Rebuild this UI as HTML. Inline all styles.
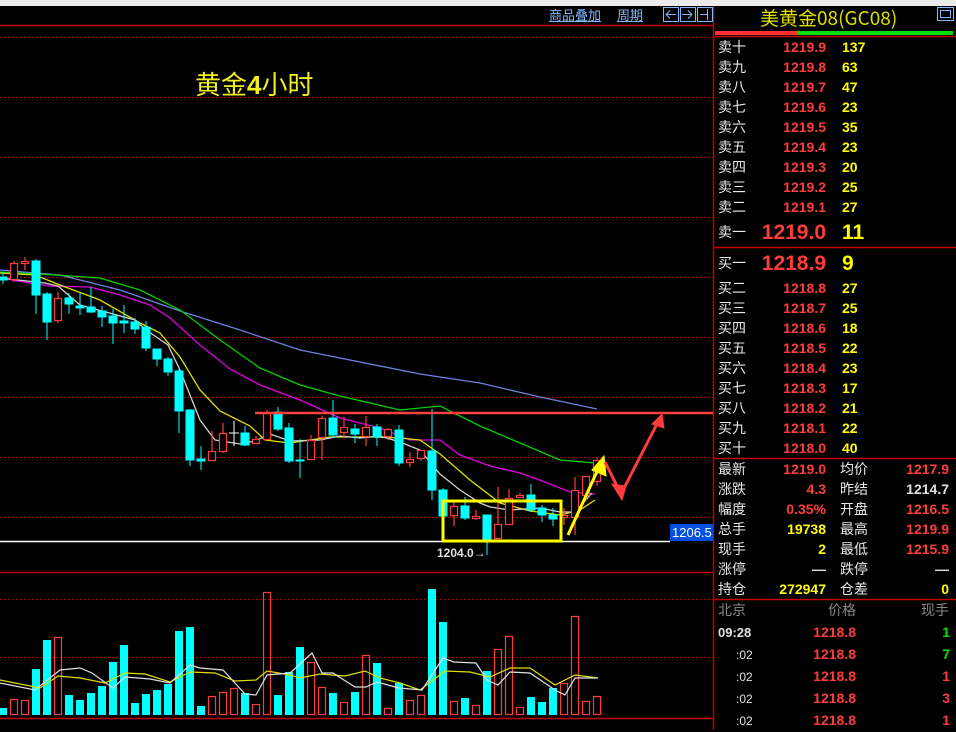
<!DOCTYPE html>
<html><head><meta charset="utf-8"><style>
body{margin:0;width:956px;height:730px;background:#000;overflow:hidden;position:relative;font-family:"Liberation Sans","WenQuanYi Zen Hei",sans-serif}
.a{position:absolute;white-space:nowrap;line-height:1}
.l{color:#e8e8e8;font-size:14px;font-family:"WenQuanYi Zen Hei","Noto Sans CJK SC",sans-serif}
.p{color:#ff3c3c;font-size:14px;font-weight:bold;text-align:right;width:70px}
.q{color:#ffff00;font-size:14px;font-weight:bold}
.v{font-size:14px;font-weight:bold;text-align:right;width:80px}
</style></head><body>
<div class="a" style="left:0;top:0;width:956px;height:6px;background:#ececec"></div>
<svg class="a" style="left:0;top:0" width="956" height="730">
<g stroke="#b00000" stroke-width="1" stroke-dasharray="2,2">
<line x1="0" y1="37.5" x2="713" y2="37.5"/><line x1="0" y1="97.5" x2="713" y2="97.5"/><line x1="0" y1="157.5" x2="713" y2="157.5"/><line x1="0" y1="217.5" x2="713" y2="217.5"/><line x1="0" y1="277.5" x2="713" y2="277.5"/><line x1="0" y1="337.5" x2="713" y2="337.5"/><line x1="0" y1="397.5" x2="713" y2="397.5"/><line x1="0" y1="457.5" x2="713" y2="457.5"/><line x1="0" y1="517.5" x2="713" y2="517.5"/><line x1="0" y1="599.5" x2="713" y2="599.5"/><line x1="0" y1="657.5" x2="713" y2="657.5"/>
</g>
<g stroke="#c00000" stroke-width="1.5">
<line x1="0" y1="25.5" x2="713" y2="25.5"/><line x1="0" y1="572.5" x2="713" y2="572.5"/><line x1="0" y1="718.5" x2="713" y2="718.5"/>
<line x1="713.5" y1="6" x2="713.5" y2="730"/>
<line x1="714" y1="247.5" x2="956" y2="247.5"/><line x1="714" y1="458.5" x2="956" y2="458.5"/><line x1="714" y1="599.5" x2="956" y2="599.5"/><line x1="714" y1="36.5" x2="956" y2="36.5"/>
</g>
<line x1="0" y1="541.5" x2="670" y2="541.5" stroke="#fff" stroke-width="1.5"/>
<rect x="715" y="31" width="82" height="4" fill="#ff3030"/><rect x="797" y="31" width="156" height="4" fill="#00e000"/>
<rect x="937.5" y="7.5" width="16" height="13" fill="none" stroke="#80b8ff"/><rect x="940.5" y="10.5" width="10" height="7" fill="none" stroke="#80b8ff"/>
<g fill="none" stroke="#80b8ff"><rect x="663.5" y="7.5" width="15" height="14"/><rect x="680.5" y="7.5" width="15" height="14"/><rect x="697.5" y="7.5" width="15" height="14"/>
<path d="M666 14.5h10M666 14.5l4-4M666 14.5l4 4M692 14.5h-10M692 14.5l-4-4M692 14.5l-4 4M700 14.5h7M707.5 9v11"/></g>
<g fill="none" stroke-width="1.3">
<polyline stroke="#7080e0" points="0,270 60,275 120,290 180,311 240,330 300,350 360,362 420,374 480,383 540,397 597,409"/>
<polyline stroke="#00d000" points="0,272 40,274 100,278 140,290 180,310 220,340 260,368 300,385 340,396 400,410 440,406 480,426 520,443 560,460 595,463"/>
<polyline stroke="#e000e0" points="0,278 30,283 50,286 90,287 120,295 150,305 170,318 200,345 230,369 260,385 300,400 340,418 380,428 410,440 440,440 460,455 490,466 520,473 545,482 570,492 595,494"/>
<polyline stroke="#e0e000" points="0,273 35,275 60,285 100,300 140,323 160,333 180,357 200,390 220,411 250,426 265,440 290,443 330,437 370,437 400,438 420,440 440,454 470,480 500,503 530,511 560,515 580,510 595,500"/>
<polyline stroke="#d0d0d0" points="0,278 45,283 58,286 80,305 135,320 146,330 168,345 180,370 200,420 215,440 240,444 255,441 270,434 290,441 320,440 340,436 360,438 380,436 400,442 420,450 440,474 460,490 480,503 490,507 510,510 540,508 560,512 575,512 592,493"/>
</g>
<g stroke="#00ffff" fill="#00ffff" stroke-width="1">
<line x1="3" y1="272" x2="3" y2="284"/><rect x="-1" y="277" width="8" height="3"/>
<line x1="36" y1="259" x2="36" y2="314"/><rect x="32" y="261" width="8" height="34"/>
<line x1="47" y1="292" x2="47" y2="340"/><rect x="43" y="294" width="8" height="28"/>
<line x1="69" y1="293" x2="69" y2="314"/><rect x="65" y="298" width="8" height="6"/>
<line x1="80" y1="293" x2="80" y2="315"/><rect x="76" y="306" width="8" height="2"/>
<line x1="91" y1="287" x2="91" y2="313"/><rect x="87" y="307" width="8" height="5"/>
<line x1="102" y1="306" x2="102" y2="327"/><rect x="98" y="311" width="8" height="6"/>
<line x1="113" y1="309" x2="113" y2="344"/><rect x="109" y="316" width="8" height="7"/>
<line x1="124" y1="305" x2="124" y2="333"/><rect x="120" y="321" width="8" height="2"/>
<line x1="135" y1="318" x2="135" y2="334"/><rect x="131" y="322" width="8" height="7"/>
<line x1="146" y1="321" x2="146" y2="351"/><rect x="142" y="327" width="8" height="21"/>
<line x1="157" y1="349" x2="157" y2="366"/><rect x="153" y="349" width="8" height="10"/>
<line x1="168" y1="357" x2="168" y2="376"/><rect x="164" y="359" width="8" height="13"/>
<line x1="179" y1="368" x2="179" y2="433"/><rect x="175" y="371" width="8" height="40"/>
<line x1="190" y1="409" x2="190" y2="466"/><rect x="186" y="410" width="8" height="50"/>
<line x1="201" y1="446" x2="201" y2="470"/><rect x="197" y="459" width="8" height="2"/>
<line x1="245" y1="426" x2="245" y2="446"/><rect x="241" y="433" width="8" height="12"/>
<line x1="278" y1="407" x2="278" y2="431"/><rect x="274" y="412" width="8" height="17"/>
<line x1="289" y1="423" x2="289" y2="463"/><rect x="285" y="428" width="8" height="33"/>
<line x1="300" y1="439" x2="300" y2="478"/><rect x="296" y="460" width="8" height="1"/>
<line x1="333" y1="400" x2="333" y2="438"/><rect x="329" y="418" width="8" height="17"/>
<line x1="355" y1="424" x2="355" y2="443"/><rect x="351" y="429" width="8" height="5"/>
<line x1="377" y1="424" x2="377" y2="446"/><rect x="373" y="427" width="8" height="10"/>
<line x1="399" y1="425" x2="399" y2="466"/><rect x="395" y="430" width="8" height="33"/>
<line x1="432" y1="409" x2="432" y2="500"/><rect x="428" y="451" width="8" height="39"/>
<line x1="443" y1="488" x2="443" y2="518"/><rect x="439" y="490" width="8" height="26"/>
<line x1="465" y1="497" x2="465" y2="520"/><rect x="461" y="506" width="8" height="12"/>
<line x1="487" y1="515" x2="487" y2="555"/><rect x="483" y="515" width="8" height="24"/>
<line x1="531" y1="484" x2="531" y2="512"/><rect x="527" y="495" width="8" height="15"/>
<line x1="542" y1="505" x2="542" y2="522"/><rect x="538" y="508" width="8" height="7"/>
<line x1="553" y1="508" x2="553" y2="526"/><rect x="549" y="515" width="8" height="4"/>
</g>
<g stroke="#fff"><line x1="234" y1="421" x2="234" y2="446"/><line x1="229" y1="433" x2="239" y2="433"/></g>
<g stroke="#ff3c3c" fill="#000" stroke-width="1.2">
<line x1="14" y1="261" x2="14" y2="282"/><rect x="10.5" y="263.5" width="7" height="16"/>
<line x1="25" y1="257" x2="25" y2="270"/><rect x="21.5" y="261.5" width="7" height="2"/>
<line x1="58" y1="292" x2="58" y2="323"/><rect x="54.5" y="298.5" width="7" height="22"/>
<line x1="212" y1="431" x2="212" y2="460"/><rect x="208.5" y="451.5" width="7" height="9"/>
<line x1="223" y1="423" x2="223" y2="453"/><rect x="219.5" y="433.5" width="7" height="18"/>
<line x1="256" y1="436" x2="256" y2="444"/><rect x="252.5" y="439.5" width="7" height="4"/>
<line x1="267" y1="410" x2="267" y2="440"/><rect x="263.5" y="413.5" width="7" height="26"/>
<line x1="311" y1="435" x2="311" y2="460"/><rect x="307.5" y="440.5" width="7" height="19"/>
<line x1="322" y1="416" x2="322" y2="460"/><rect x="318.5" y="418.5" width="7" height="19"/>
<line x1="344" y1="417" x2="344" y2="438"/><rect x="340.5" y="427.5" width="7" height="5"/>
<line x1="366" y1="416" x2="366" y2="446"/><rect x="362.5" y="427.5" width="7" height="9"/>
<line x1="388" y1="428" x2="388" y2="440"/><rect x="384.5" y="429.5" width="7" height="7"/>
<line x1="410" y1="452" x2="410" y2="467"/><rect x="406.5" y="459.5" width="7" height="3"/>
<line x1="421" y1="450" x2="421" y2="461"/><rect x="417.5" y="450.5" width="7" height="8"/>
<line x1="454" y1="502" x2="454" y2="526"/><rect x="450.5" y="506.5" width="7" height="9"/>
<line x1="476" y1="510" x2="476" y2="520"/><rect x="472.5" y="516.5" width="7" height="2"/>
<line x1="498" y1="487" x2="498" y2="539"/><rect x="494.5" y="524.5" width="7" height="14"/>
<line x1="509" y1="489" x2="509" y2="525"/><rect x="505.5" y="498.5" width="7" height="26"/>
<line x1="520" y1="493" x2="520" y2="498"/><rect x="516.5" y="495.5" width="7" height="2"/>
<line x1="564" y1="508" x2="564" y2="525"/><rect x="560.5" y="515.5" width="7" height="2"/>
<line x1="575" y1="477" x2="575" y2="535"/><rect x="571.5" y="490.5" width="7" height="27"/>
<line x1="586" y1="476" x2="586" y2="500"/><rect x="582.5" y="476.5" width="7" height="19"/>
<line x1="597" y1="458" x2="597" y2="486"/><rect x="593.5" y="460.5" width="7" height="21"/>
</g>
<line x1="255" y1="413" x2="713" y2="413" stroke="#ff4040" stroke-width="2.5"/>
<rect x="443" y="501" width="118" height="40" fill="none" stroke="#ffff00" stroke-width="3"/>
<g fill="#ffff00" stroke="#ffff00" stroke-width="3"><line x1="568" y1="535" x2="600" y2="465"/><path d="M604 456 L606 476 L592 470 Z" stroke-width="1"/></g>
<g fill="#ff3c3c" stroke="#ff3c3c" stroke-width="3"><polyline fill="none" points="605,462 621,494 659,420"/><path d="M622 500 L612 484 L626 486 Z M662 414 L664 428 L652 424 Z" stroke-width="1"/></g>
<rect x="670" y="524" width="43" height="17" fill="#0050e0"/>
<g fill="#00ffff">
<rect x="-1" y="708" width="8" height="7"/><rect x="32" y="669" width="8" height="46"/><rect x="43" y="640" width="8" height="75"/><rect x="65" y="695" width="8" height="20"/><rect x="76" y="700" width="8" height="15"/><rect x="87" y="693" width="8" height="22"/><rect x="98" y="686" width="8" height="29"/><rect x="109" y="662" width="8" height="53"/><rect x="120" y="645" width="8" height="70"/><rect x="131" y="703" width="8" height="12"/><rect x="142" y="694" width="8" height="21"/><rect x="153" y="690" width="8" height="25"/><rect x="164" y="684" width="8" height="31"/><rect x="175" y="631" width="8" height="84"/><rect x="186" y="627" width="8" height="88"/><rect x="197" y="706" width="8" height="9"/><rect x="241" y="693" width="8" height="22"/><rect x="274" y="695" width="8" height="20"/><rect x="285" y="672" width="8" height="43"/><rect x="296" y="647" width="8" height="68"/><rect x="329" y="693" width="8" height="22"/><rect x="351" y="692" width="8" height="23"/><rect x="373" y="663" width="8" height="52"/><rect x="395" y="683" width="8" height="32"/><rect x="428" y="589" width="8" height="126"/><rect x="439" y="622" width="8" height="93"/><rect x="461" y="698" width="8" height="17"/><rect x="483" y="671" width="8" height="44"/><rect x="527" y="697" width="8" height="18"/><rect x="538" y="702" width="8" height="13"/><rect x="549" y="688" width="8" height="27"/>
</g>
<g fill="none" stroke="#ff3c3c" stroke-width="1.2">
<rect x="10.5" y="699.5" width="7" height="15"/><rect x="21.5" y="700.5" width="7" height="14"/><rect x="54.5" y="637.5" width="7" height="77"/><rect x="208.5" y="696.5" width="7" height="18"/><rect x="219.5" y="692.5" width="7" height="22"/><rect x="230.5" y="688.5" width="7" height="26"/><rect x="252.5" y="704.5" width="7" height="10"/><rect x="263.5" y="592.5" width="7" height="122"/><rect x="307.5" y="662.5" width="7" height="52"/><rect x="318.5" y="687.5" width="7" height="27"/><rect x="340.5" y="702.5" width="7" height="12"/><rect x="362.5" y="655.5" width="7" height="59"/><rect x="384.5" y="708.5" width="7" height="6"/><rect x="406.5" y="700.5" width="7" height="14"/><rect x="417.5" y="695.5" width="7" height="19"/><rect x="450.5" y="701.5" width="7" height="13"/><rect x="472.5" y="705.5" width="7" height="9"/><rect x="494.5" y="649.5" width="7" height="65"/><rect x="505.5" y="636.5" width="7" height="78"/><rect x="516.5" y="707.5" width="7" height="7"/><rect x="560.5" y="683.5" width="7" height="31"/><rect x="571.5" y="616.5" width="7" height="98"/><rect x="582.5" y="701.5" width="7" height="13"/><rect x="593.5" y="696.5" width="7" height="18"/>
</g>
<g fill="none" stroke-width="1.2">
<polyline stroke="#e0e000" points="0,680 40,688 58,676 80,678 105,683 125,673 145,674 170,682 190,672 215,673 235,681 256,680 267,671 290,675 300,678 320,674 345,676 365,671 380,678 400,683 420,690 445,671 470,672 490,677 510,668 530,668 555,685 575,675 598,678"/>
<polyline stroke="#e0e0e0" points="0,683 35,690 60,670 80,668 92,673 113,688 125,677 150,679 170,683 190,665 200,668 223,670 245,694 256,695 267,675 290,673 300,664 312,653 322,673 333,673 355,687 366,687 377,682 388,685 399,688 422,690 443,658 454,662 476,663 487,680 498,685 510,672 530,673 555,690 565,695 575,678 598,678"/>
</g>
</svg>
<div class="a" style="left:195px;top:71px;font-size:26px;color:#f0f020;font-family:'WenQuanYi Zen Hei','Noto Sans CJK SC',sans-serif">黄金<b style="font-family:'Liberation Sans'">4</b>小时</div>
<div class="a" style="left:549px;top:9px;font-size:13px;color:#80b8ff;text-decoration:underline;font-family:'WenQuanYi Zen Hei',sans-serif">商品叠加</div>
<div class="a" style="left:617px;top:9px;font-size:13px;color:#80b8ff;text-decoration:underline;font-family:'WenQuanYi Zen Hei',sans-serif">周期</div>
<div class="a" style="left:672px;top:526px;font-size:13px;color:#fff">1206.5</div>
<div class="a" style="left:437px;top:547px;font-size:12px;color:#e0e0e0;font-weight:bold">1204.0<span style="font-weight:normal">→</span></div>
<div class="a" style="left:760px;top:8px;font-size:19px;color:#e0e000;font-family:'WenQuanYi Zen Hei','Noto Sans CJK SC',sans-serif">美黄金08(GC08)</div>

<div class="a l" style="left:718px;top:37px;line-height:20px">卖十<br>卖九<br>卖八<br>卖七<br>卖六<br>卖五<br>卖四<br>卖三<br>卖二</div>
<div class="a p" style="left:756px;top:37px;line-height:20px">1219.9<br>1219.8<br>1219.7<br>1219.6<br>1219.5<br>1219.4<br>1219.3<br>1219.2<br>1219.1</div>
<div class="a q" style="left:842px;top:37px;line-height:20px">137<br>63<br>47<br>23<br>35<br>23<br>20<br>25<br>27</div>
<div class="a l" style="left:718px;top:225px">卖一</div>
<div class="a p" style="left:728px;top:222px;width:98px;font-size:21px">1219.0</div>
<div class="a q" style="left:842px;top:222px;font-size:21px">11</div>
<div class="a l" style="left:718px;top:256px">买一</div>
<div class="a p" style="left:728px;top:253px;width:98px;font-size:21px">1218.9</div>
<div class="a q" style="left:842px;top:253px;font-size:21px">9</div>
<div class="a l" style="left:718px;top:278px;line-height:20px">买二<br>买三<br>买四<br>买五<br>买六<br>买七<br>买八<br>买九<br>买十</div>
<div class="a p" style="left:756px;top:278px;line-height:20px">1218.8<br>1218.7<br>1218.6<br>1218.5<br>1218.4<br>1218.3<br>1218.2<br>1218.1<br>1218.0</div>
<div class="a q" style="left:842px;top:278px;line-height:20px">27<br>25<br>18<br>22<br>23<br>17<br>21<br>22<br>40</div>

<div class="a l" style="left:718px;top:459px;line-height:20px">最新<br>涨跌<br>幅度<br>总手<br>现手<br>涨停<br>持仓</div>
<div class="a v" style="left:746px;top:459px;line-height:20px"><span style="color:#ff3c3c">1219.0<br>4.3<br>0.35%</span><br><span style="color:#ffff00">19738<br>2</span><br><span style="color:#e0e0e0">—</span><br><span style="color:#ffff00">272947</span></div>
<div class="a l" style="left:840px;top:459px;line-height:20px">均价<br>昨结<br>开盘<br>最高<br>最低<br>跌停<br>仓差</div>
<div class="a v" style="left:869px;top:459px;line-height:20px"><span style="color:#ff3c3c">1217.9</span><br><span style="color:#e0e0e0">1214.7</span><br><span style="color:#ff3c3c">1216.5<br>1219.9<br>1215.9</span><br><span style="color:#e0e0e0">—</span><br><span style="color:#ffff00">0</span></div>

<div class="a l" style="left:718px;top:603px;color:#888">北京</div>
<div class="a l" style="left:828px;top:603px;color:#888">价格</div>
<div class="a l" style="left:921px;top:603px;color:#888">现手</div>
<div class="a" style="left:718px;top:626px;font-size:13px;font-weight:bold;color:#e0e0e0">09:28</div>
<div class="a" style="left:736px;top:644px;font-size:12px;color:#e0e0e0;line-height:22px">:02<br>:02<br>:02<br>:02</div>
<div class="a p" style="left:786px;top:621px;line-height:22px">1218.8<br>1218.8<br>1218.8<br>1218.8<br>1218.8</div>
<div class="a v" style="left:870px;top:621px;line-height:22px"><span style="color:#00e000">1<br>7</span><br><span style="color:#ff3c3c">1<br>3<br>1</span></div>
</body></html>
